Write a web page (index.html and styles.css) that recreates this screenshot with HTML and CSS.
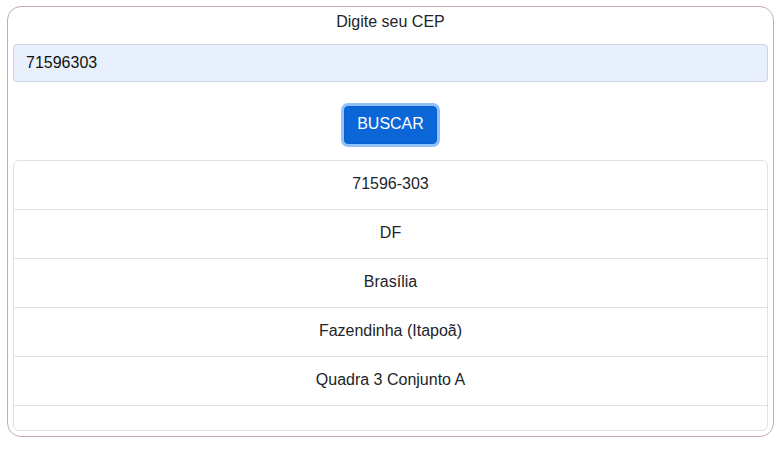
FILE: index.html
```html
<!DOCTYPE html>
<html lang="pt-BR">
<head>
<meta charset="utf-8">
<title>CEP</title>
<link rel="stylesheet" href="styles.css">
</head>
<body>
<div class="card">
  <div class="title">Digite seu CEP</div>
  <input class="cep-input" type="text" value="71596303">
  <div class="actions">
    <button class="btn" type="button">BUSCAR</button>
  </div>
  <ul class="list">
    <li class="item">71596-303</li>
    <li class="item">DF</li>
    <li class="item">Brasília</li>
    <li class="item">Fazendinha (Itapoã)</li>
    <li class="item">Quadra 3 Conjunto A</li>
    <li class="item"></li>
  </ul>
</div>
</body>
</html>
```

FILE: styles.css
```css
* { box-sizing: border-box; }
html, body {
  margin: 0;
  padding: 0;
  background: #fff;
}
body {
  font-family: "Liberation Sans", Arial, sans-serif;
  font-size: 16px;
  line-height: 24px;
  color: #212529;
  padding: 6px 7px 0 7px;
}
.card {
  border: 1px solid #c2acae;
  border-radius: 14px;
  padding: 3px 5px 5px 5px;
  display: flex;
  flex-direction: column;
}
.title {
  text-align: center;
  height: 24px;
  margin-bottom: 10px;
}
.cep-input {
  display: block;
  width: 100%;
  height: 38px;
  font-family: inherit;
  font-size: 16px;
  color: #111;
  background: #e8f0fe;
  border: 1px solid #cfd4da;
  border-radius: 4px;
  padding: 6px 12px;
  outline: none;
}
.actions {
  display: flex;
  justify-content: center;
  margin-top: 24px;
  margin-bottom: 16px;
}
.btn {
  font-family: inherit;
  font-size: 16px;
  line-height: 24px;
  color: #fff;
  background: #0b66d8;
  border: 1px solid #0a60cc;
  border-radius: 4px;
  padding: 5px 12px 7px;
  height: 38px;
  box-shadow: 0 0 0 3px #91c0fb;
  cursor: pointer;
}
.list {
  list-style: none;
  margin: 0;
  padding: 0;
  border: 1px solid #dee2e6;
  border-radius: 6px;
}
.item {
  text-align: center;
  padding: 11px 16px 13px;
  min-height: 49px;
  border-top: 1px solid #dee2e6;
}
.item:first-child { border-top: 0; min-height: 48px; }
.item:empty { min-height: 25px; }
```
